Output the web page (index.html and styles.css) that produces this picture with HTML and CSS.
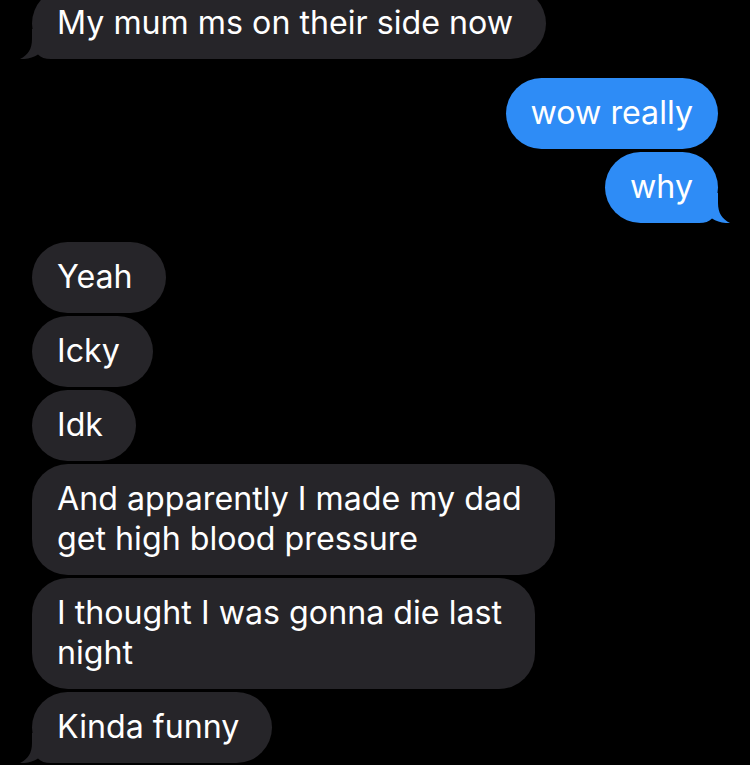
FILE: index.html
```html
<!DOCTYPE html>
<html lang="en">
<head>
    <meta charset="UTF-8">
    <meta name="viewport" content="width=device-width, initial-scale=1.0">
    <title>Messages</title>
    <link rel="stylesheet" href="styles.css">
</head>
<body>
    <div class="thread">
        <div class="group">
            <div class="msg in tail">My mum ms on their side now
                <svg class="tail-shape" viewBox="0 0 50 30"><path d="M12 0 V10 C12 20 8 26 0 30 C7 30.5 13 28.5 18 25.5 C21 28.5 25 30 31 30 H50 V0 Z"/></svg>
            </div>
        </div>

        <div class="group out-group">
            <div class="msg out">wow really</div>
            <div class="msg out tail">why
                <svg class="tail-shape" viewBox="0 0 50 30"><path d="M12 0 V10 C12 20 8 26 0 30 C7 30.5 13 28.5 18 25.5 C21 28.5 25 30 31 30 H50 V0 Z"/></svg>
            </div>
        </div>

        <div class="group">
            <div class="msg in">Yeah</div>
            <div class="msg in">Icky</div>
            <div class="msg in">Idk</div>
            <div class="msg in">And apparently I made my dad<br>get high blood pressure</div>
            <div class="msg in">I thought I was gonna die last<br>night</div>
            <div class="msg in tail">Kinda funny
                <svg class="tail-shape" viewBox="0 0 50 30"><path d="M12 0 V10 C12 20 8 26 0 30 C7 30.5 13 28.5 18 25.5 C21 28.5 25 30 31 30 H50 V0 Z"/></svg>
            </div>
        </div>
    </div>
</body>
</html>
```

FILE: styles.css
```css
body {
    margin: 0;
    background: #000;
    font-family: Inter, "Noto Sans", sans-serif;
    overflow: hidden;
}
.thread {
    display: flex;
    flex-direction: column;
    gap: 19px;
    padding: 0 32px;
    margin-top: -12px;
}
.group {
    display: flex;
    flex-direction: column;
    align-items: flex-start;
    gap: 3px;
}
.out-group {
    align-items: flex-end;
}
.msg {
    position: relative;
    isolation: isolate;
    padding: 15px 25px 16px;
    border-radius: 36px;
    font-size: 32.2px;
    line-height: 40px;
    color: #fff;
    white-space: nowrap;
}
.in {
    background: #262529;
    padding-right: 33px;
}
.out {
    background: #2e8cf6;
}
.tail-shape {
    position: absolute;
    z-index: -1;
    bottom: 0;
    left: -12px;
    width: 50px;
    height: 30px;
}
.in .tail-shape {
    fill: #262529;
}
.out .tail-shape {
    fill: #2e8cf6;
    left: auto;
    right: -12px;
    transform: scaleX(-1);
}
```
